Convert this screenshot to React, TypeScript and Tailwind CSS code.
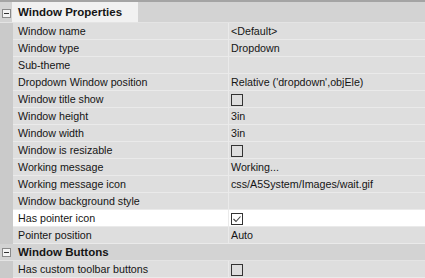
import React from "react";

type Row = {
  name: string;
  value?: string;
  check?: boolean;
  checked?: boolean;
  selected?: boolean;
};

const windowProps: Row[] = [
  { name: "Window name", value: "<Default>" },
  { name: "Window type", value: "Dropdown" },
  { name: "Sub-theme" },
  { name: "Dropdown Window position", value: "Relative ('dropdown',objEle)" },
  { name: "Window title show", check: true },
  { name: "Window height", value: "3in" },
  { name: "Window width", value: "3in" },
  { name: "Window is resizable", check: true },
  { name: "Working message", value: "Working..." },
  { name: "Working message icon", value: "css/A5System/Images/wait.gif" },
  { name: "Window background style" },
  { name: "Has pointer icon", check: true, checked: true, selected: true },
  { name: "Pointer position", value: "Auto" },
];

const windowButtons: Row[] = [{ name: "Has custom toolbar buttons", check: true }];

function Collapse() {
  return (
    <div className="w-[9px] h-[9px] border border-[#8a8a8a] bg-[#f4f4f4] flex items-center justify-center">
      <div className="w-[5px] h-px bg-[#333]" />
    </div>
  );
}

function CheckBox({ checked }: { checked?: boolean }) {
  return (
    <div className="mt-[3px] w-[12px] h-[12px] border border-[#333] flex items-center justify-center">
      {checked && (
        <svg width="10" height="10" viewBox="0 0 10 10">
          <path d="M1.5 5 L4 7.5 L8.5 2.5" fill="none" stroke="#444" strokeWidth="1.1" />
        </svg>
      )}
    </div>
  );
}

function Header({ label, first }: { label: string; first?: boolean }) {
  return (
    <div className="flex bg-[#d3d3d3] border-b border-[#e4e4e4]">
      <div className={`w-[12px] flex justify-center ${first ? "pt-[7px] h-[18px]" : "pt-[4px] h-[16px]"}`}>
        <Collapse />
      </div>
      {first ? (
        <div className="relative z-10 h-[20px] w-[126px] bg-[#f1f1f1] pl-[6px] font-bold text-[11.5px] leading-[20px]">
          {label}
        </div>
      ) : (
        <div className="h-[16px] pl-[6px] font-bold text-[11.5px] leading-[16px]">{label}</div>
      )}
    </div>
  );
}

function PropRow({ row }: { row: Row }) {
  const bg = row.selected ? "bg-white" : "bg-[#dedede]";
  return (
    <div className="flex h-[17px]">
      <div className="w-[13px] bg-[#cacaca]" />
      <div className="flex flex-1 border-b border-[#eaeaea]">
        <div className={`w-[216px] pl-[5px] leading-[16px] border-r border-[#eaeaea] ${bg}`}>{row.name}</div>
        <div className={`flex-1 pl-[2px] leading-[16px] ${bg}`}>
          {row.check ? <CheckBox checked={row.checked} /> : row.value}
        </div>
      </div>
    </div>
  );
}

export default function App() {
  return (
    <div className="w-[425px] h-[278px] overflow-hidden bg-[#d6d6d6] border-t-2 border-[#a4a4a4] font-['Liberation_Sans',Arial,sans-serif] text-[10.7px] text-[#151515]">
      <Header label="Window Properties" first />
      {windowProps.map((r) => (
        <PropRow key={r.name} row={r} />
      ))}
      <Header label="Window Buttons" />
      {windowButtons.map((r) => (
        <PropRow key={r.name} row={r} />
      ))}
      <div className="flex h-[17px]">
        <div className="w-[13px] bg-[#cacaca]" />
        <div className="flex-1 bg-[#d6d6d6]" />
      </div>
    </div>
  );
}
